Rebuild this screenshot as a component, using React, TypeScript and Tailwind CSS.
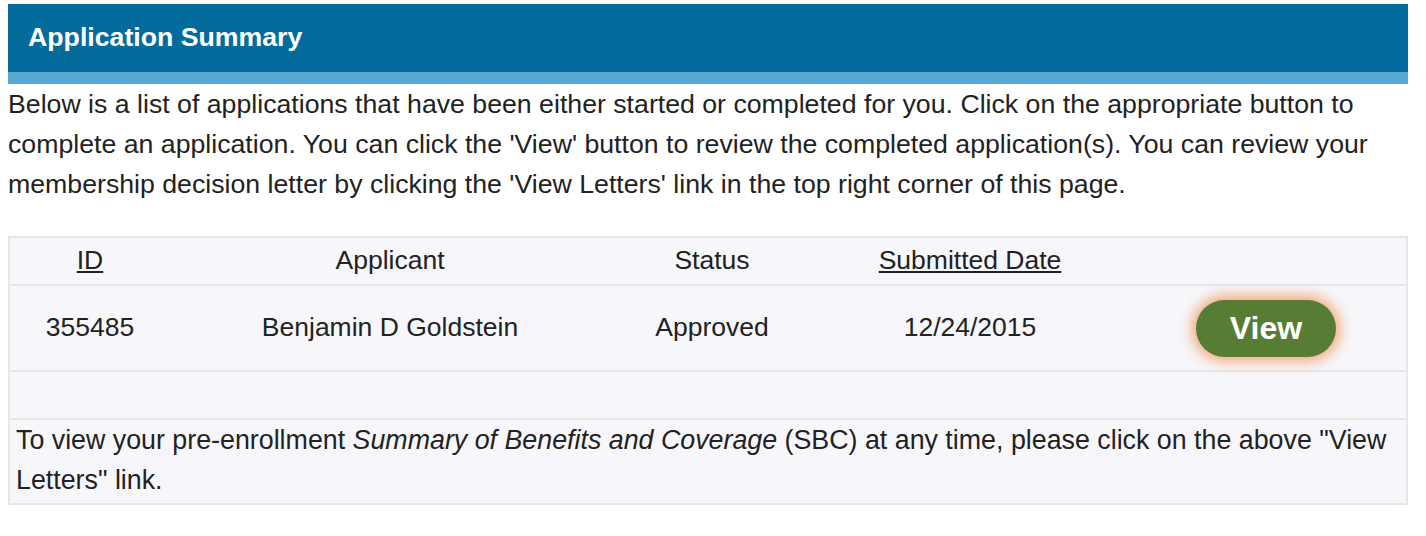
const rows = [
  { id: "355485", applicant: "Benjamin D Goldstein", status: "Approved", date: "12/24/2015" },
];

const cols = "grid grid-cols-[160px_440px_204px_312px_1fr]";

export default function App() {
  return (
    <div className="min-h-screen bg-white text-[#222] font-['Liberation_Sans',Arial,sans-serif] pt-1 px-2">
      {/* page heading */}
      <div className="w-[1400px]">
        <div className="bg-[#036c9d] h-[68px] flex items-center pl-5 pb-0.5">
          <h1 className="text-white font-bold text-[26.7px]">Application Summary</h1>
        </div>
        <div className="bg-[#56aad2] h-3" />
      </div>

      <p className="text-[26.7px] leading-[40px] w-[1400px]">
        Below is a list of applications that have been either started or completed for you. Click on the appropriate button to
        complete an application. You can click the 'View' button to review the completed application(s). You can review your
        membership decision letter by clicking the 'View Letters' link in the top right corner of this page.
      </p>

      {/* applications table */}
      <div className="mt-8 w-[1400px] border-2 border-[#e6e6e8] bg-[#f7f7fb] text-[26.5px]">
        <div className={`${cols} h-[46px] items-center text-center`}>
          <span className="underline">ID</span>
          <span>Applicant</span>
          <span>Status</span>
          <span className="underline">Submitted Date</span>
          <span />
        </div>
        {rows.map((r) => (
          <div key={r.id} className={`${cols} h-[86px] items-center text-center border-t-2 border-[#e6e6e8]`}>
            <span>{r.id}</span>
            <span>{r.applicant}</span>
            <span>{r.status}</span>
            <span>{r.date}</span>
            <div className="flex justify-center">
              <button className="w-[140px] h-[57px] rounded-full bg-[#577d35] text-white font-bold text-[32px] shadow-[0_0_14px_4px_rgba(240,130,60,0.7)]">
                View
              </button>
            </div>
          </div>
        ))}
        <div className="h-12 border-t-2 border-[#e6e6e8]" />
        <div className="border-t-2 border-[#e6e6e8] px-1.5 pb-[3px] text-[26.8px] leading-[40px]">
          To view your pre-enrollment <em>Summary of Benefits and Coverage</em> (SBC) at any time, please click on the above "View
          Letters" link.
        </div>
      </div>
    </div>
  );
}
